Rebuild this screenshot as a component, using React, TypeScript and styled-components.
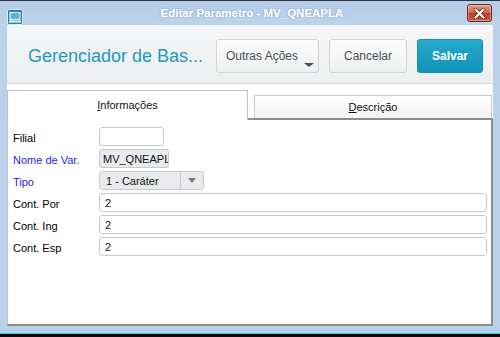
import React from "react";
import styled, { createGlobalStyle } from "styled-components";

const GlobalStyle = createGlobalStyle`
  html, body {
    margin: 0;
    padding: 0;
    background: #101010;
  }
  body {
    font-family: "Liberation Sans", Arial, sans-serif;
  }
`;

const Window = styled.div`
  width: 500px;
  height: 337px;
  display: flex;
  flex-direction: column;
  background: #bad1ea;
  border-top: 1px solid #2e3338;
  box-sizing: border-box;
  overflow: hidden;
`;

const TitleBar = styled.div`
  height: 24px;
  display: flex;
  align-items: center;
  padding: 0 8px 0 7px;
  background: linear-gradient(#b4cce7, #bcd3ec);
`;

const AppIcon = styled.svg`
  align-self: flex-end;
  width: 16px;
  height: 16px;
`;

const Title = styled.div`
  flex: 1;
  text-align: center;
  color: #ffffff;
  font-size: 11.5px;
  font-weight: bold;
  text-shadow: 0 0 2px rgba(80, 110, 150, 0.5);
  padding-left: 14px;
`;

const CloseButton = styled.div`
  width: 25px;
  height: 18px;
  box-sizing: border-box;
  border: 1px solid #6b2a20;
  border-radius: 3px;
  background: linear-gradient(#e3a08c, #cf5e47 50%, #bd3b26 51%, #c9573f);
  display: flex;
  align-items: center;
  justify-content: center;
  box-shadow: inset 0 0 0 1px rgba(255, 255, 255, 0.35);
`;

const Client = styled.div`
  flex: 1;
  margin: 0 7px;
  display: flex;
  flex-direction: column;
  min-height: 0;
`;

const Header = styled.div`
  height: 59px;
  box-sizing: border-box;
  display: flex;
  align-items: flex-start;
  padding: 14px 10px 0 21px;
  gap: 10px;
  background: linear-gradient(#f5f6f7, #eceef0);
  border-bottom: 1px solid #d6d8da;
`;

const PageTitle = styled.div`
  flex: 1;
  height: 34px;
  line-height: 35px;
  color: #1c9bc4;
  font-size: 18px;
  white-space: nowrap;
`;

const Button = styled.div<{ $primary?: boolean; $width: number }>`
  position: relative;
  width: ${(p) => p.$width}px;
  height: 34px;
  box-sizing: border-box;
  border-radius: 3px;
  border: 1px solid ${(p) => (p.$primary ? "#1590b5" : "#d2d4d6")};
  background: ${(p) =>
    p.$primary
      ? "linear-gradient(#27a9cc, #1193ba)"
      : "linear-gradient(#fbfbfb, #eeeff0)"};
  color: ${(p) => (p.$primary ? "#ffffff" : "#4a4f55")};
  font-weight: ${(p) => (p.$primary ? "bold" : "normal")};
  font-size: 12px;
  display: flex;
  align-items: center;
  justify-content: center;
`;

const MenuLabel = styled.span`
  margin-left: -11px;
`;

const Caret = styled.span`
  position: absolute;
  right: 4px;
  bottom: 5px;
  width: 0;
  height: 0;
  border-left: 5px solid transparent;
  border-right: 5px solid transparent;
  border-top: 4px solid #4a4f55;
`;

const TabArea = styled.div`
  flex: 1;
  display: flex;
  flex-direction: column;
  background: #ffffff;
  min-height: 0;
`;

const TabStrip = styled.div`
  height: 36px;
  display: flex;
  align-items: flex-end;
`;

const ActiveTab = styled.div`
  width: 241px;
  height: 30px;
  box-sizing: border-box;
  border: 1px solid #bfc1c4;
  border-bottom: none;
  background: #ffffff;
  display: flex;
  align-items: center;
  justify-content: center;
  font-size: 11px;
  color: #111;
  padding-bottom: 2px;
`;

const TabFiller = styled.div`
  flex: 1;
  height: 100%;
  box-sizing: border-box;
  display: flex;
  align-items: flex-end;
  padding-left: 6px;
  border-bottom: 2px solid #8a8e93;
`;

const InactiveTab = styled.div`
  flex: 1;
  height: 23px;
  box-sizing: border-box;
  border: 1px solid #c8cacc;
  border-bottom: none;
  margin-right: 1px;
  background: linear-gradient(#ffffff, #f3f3f3);
  display: flex;
  align-items: center;
  justify-content: center;
  font-size: 11px;
  color: #111;
`;

const Panel = styled.div`
  flex: 1;
  box-sizing: border-box;
  border-left: 1px solid #c4c6c8;
  border-right: 2px solid #8a8e93;
  border-bottom: 2px solid #8a8e93;
  padding: 7px 4px 0 5px;
`;

const Form = styled.div`
  display: grid;
  grid-template-columns: 86px 1fr;
  grid-auto-rows: 19px;
  row-gap: 3px;
  align-items: center;
`;

const Label = styled.div<{ $required?: boolean }>`
  font-size: 11px;
  padding-top: 2px;
  color: ${(p) => (p.$required ? "#2424e6" : "#000000")};
  white-space: nowrap;
`;

const Field = styled.div<{ $width?: number; $readonly?: boolean }>`
  width: ${(p) => (p.$width ? `${p.$width}px` : "100%")};
  height: 19px;
  box-sizing: border-box;
  border: 1px solid #c7c9cc;
  border-radius: 3px;
  background: ${(p) => (p.$readonly ? "#e8eaee" : "#ffffff")};
  font-size: 11px;
  color: #111;
  display: flex;
  align-items: center;
  padding-left: ${(p) => (p.$readonly ? "3px" : "5px")};
  overflow: hidden;
  white-space: nowrap;
`;

const Select = styled(Field)`
  padding-left: 0;
`;

const SelectValue = styled.span`
  flex: 1;
  padding-left: 6px;
`;

const SelectArrow = styled.span`
  width: 22px;
  height: 100%;
  border-left: 1px solid #c7c9cc;
  display: flex;
  align-items: center;
  justify-content: center;

  &::after {
    content: "";
    border-left: 4px solid transparent;
    border-right: 4px solid transparent;
    border-top: 5px solid #7a7d82;
  }
`;

const BottomFrame = styled.div`
  height: 7px;
`;

const TaskStrip = styled.div`
  height: 3px;
  border-top: 1px solid #2fd0e6;
  background: #0c0c0c;
`;

export default function App() {
  return (
    <>
      <GlobalStyle />
      <Window>
        <TitleBar>
          <AppIcon viewBox="0 0 16 16">
            <rect x="0.5" y="0.5" width="15" height="15" rx="1.5" fill="#1f86ab" stroke="#d9ecf7" />
            <rect x="3" y="3.5" width="10" height="7" fill="#5fb3d4" stroke="#ffffff" strokeWidth="1" />
            <rect x="2" y="11.5" width="12" height="2" fill="#ffffff" />
          </AppIcon>
          <Title>Editar Parametro - MV_QNEAPLA</Title>
          <CloseButton>
            <svg width="13" height="11" viewBox="0 0 13 11">
              <path d="M2.5 1.5 L10.5 9.5 M10.5 1.5 L2.5 9.5" stroke="#5a2018" strokeWidth="3.6" strokeLinecap="round" />
              <path d="M2.5 1.5 L10.5 9.5 M10.5 1.5 L2.5 9.5" stroke="#ffffff" strokeWidth="2.2" strokeLinecap="round" />
            </svg>
          </CloseButton>
        </TitleBar>
        <Client>
          <Header>
            <PageTitle>Gerenciador de Bas...</PageTitle>
            <Button $width={103}>
              <MenuLabel>Outras Ações</MenuLabel>
              <Caret />
            </Button>
            <Button $width={78}>Cancelar</Button>
            <Button $width={66} $primary>
              Salvar
            </Button>
          </Header>
          <TabArea>
            <TabStrip>
              <ActiveTab>
                <span>
                  <u>I</u>nformações
                </span>
              </ActiveTab>
              <TabFiller>
                <InactiveTab>
                  <span>
                    <u>D</u>escrição
                  </span>
                </InactiveTab>
              </TabFiller>
            </TabStrip>
            <Panel>
              <Form>
                <Label>Filial</Label>
                <Field $width={65} />
                <Label $required>Nome de Var.</Label>
                <Field $width={70} $readonly>
                  MV_QNEAPL
                </Field>
                <Label $required>Tipo</Label>
                <Select $width={105} $readonly>
                  <SelectValue>1 - Caráter</SelectValue>
                  <SelectArrow />
                </Select>
                <Label>Cont. Por</Label>
                <Field>2</Field>
                <Label>Cont. Ing</Label>
                <Field>2</Field>
                <Label>Cont. Esp</Label>
                <Field>2</Field>
              </Form>
            </Panel>
          </TabArea>
        </Client>
        <BottomFrame />
        <TaskStrip />
      </Window>
    </>
  );
}
